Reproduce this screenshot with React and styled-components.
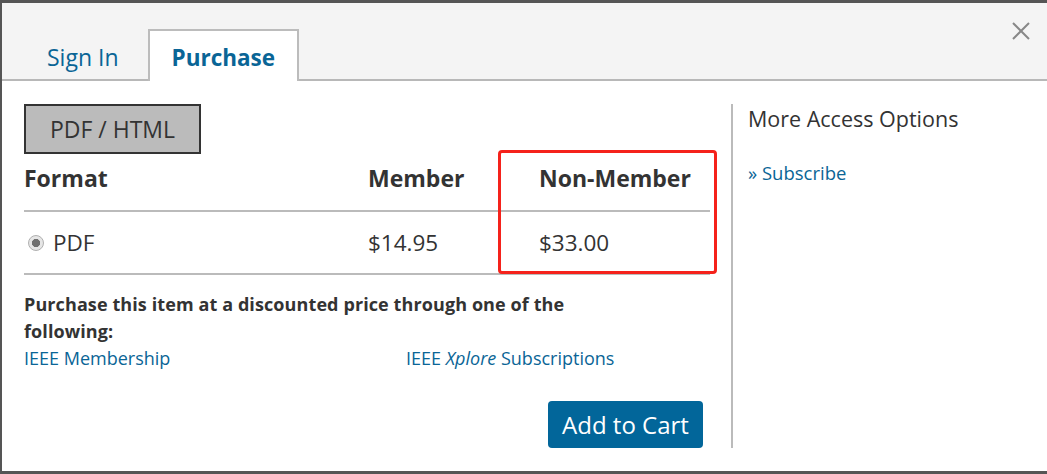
import styled, { createGlobalStyle } from 'styled-components'

const GlobalStyle = createGlobalStyle`
  html, body {
    margin: 0;
    padding: 0;
    background: #fff;
  }
  body {
    font-family: "Open Sans", "Noto Sans", sans-serif;
    color: #333;
  }
`

const Modal = styled.div`
  width: 1047px;
  height: 474px;
  box-sizing: border-box;
  border-top: 3px solid #555;
  border-left: 2px solid #555;
  border-bottom: 3px solid #555;
  display: flex;
  flex-direction: column;
  overflow: hidden;
`

const Header = styled.div`
  position: relative;
  height: 76px;
  background: #f4f4f4;
  border-bottom: 2px solid #b8b8b8;
  display: flex;
  align-items: flex-end;
  gap: 5px;
  padding-left: 21px;
`

const Tab = styled.div`
  height: ${p => (p.$active ? '52px' : '48px')};
  margin-bottom: ${p => (p.$active ? '-2px' : '0')};
  box-sizing: border-box;
  padding: 2px 22px 0;
  display: flex;
  align-items: center;
  font-size: ${p => (p.$active ? '22.5px' : '23px')};
  font-weight: ${p => (p.$active ? 700 : 400)};
  color: #0a6596;
  background: ${p => (p.$active ? '#fff' : 'transparent')};
  border: 2px solid ${p => (p.$active ? '#bcbcbc' : 'transparent')};
  border-bottom: none;
`

const Close = styled.button`
  position: absolute;
  top: 16px;
  right: 14px;
  width: 24px;
  height: 24px;
  padding: 0;
  border: none;
  background: none;
`

const Body = styled.div`
  flex: 1;
  display: flex;
  padding: 23px 0 23px 22px;
`

const Main = styled.div`
  width: 686px;
  display: flex;
  flex-direction: column;
`

const FormatButton = styled.div`
  align-self: flex-start;
  width: 177px;
  height: 50px;
  box-sizing: border-box;
  background: #bbb;
  border: 2px solid #333;
  display: flex;
  align-items: center;
  justify-content: center;
  font-size: 23px;
  color: #333;
`

const TableWrap = styled.div`
  position: relative;
`

const Row = styled.div`
  display: grid;
  grid-template-columns: 344px 171px 1fr;
  align-items: center;
  height: ${p => p.$h}px;
  padding-bottom: ${p => p.$pb || 0}px;
  border-bottom: 2px solid #bbb;
  font-size: ${p => (p.$head ? '23px' : '22.5px')};
  font-weight: ${p => (p.$head ? 700 : 400)};
  box-sizing: border-box;
`

const Cell = styled.div`
  display: flex;
  align-items: center;
  gap: 9px;
`

const Radio = styled.span`
  width: 16px;
  height: 16px;
  margin-left: 4px;
  border-radius: 50%;
  box-sizing: border-box;
  border: 1px solid #b0b0b0;
  background: radial-gradient(circle, #707070 0 3.8px, #e6e6e6 4.4px);
`

const Highlight = styled.div`
  position: absolute;
  left: 474px;
  top: -4px;
  width: 219px;
  height: 124px;
  box-sizing: border-box;
  border: 3px solid #f5221b;
  border-radius: 4px;
  pointer-events: none;
`

const Note = styled.p`
  margin: 16px 0 0;
  width: 580px;
  font-size: 18px;
  line-height: 27px;
  font-weight: 700;
  color: #333;
  letter-spacing: 0.1px;
`

const Links = styled.div`
  display: grid;
  grid-template-columns: 382px 1fr;
  font-size: 18px;
  line-height: 26px;
`

const Link = styled.a`
  color: #0a6596;
  text-decoration: none;
  em {
    font-style: italic;
  }
`

const CartRow = styled.div`
  margin-top: auto;
  display: flex;
  justify-content: flex-end;
  padding-right: 7px;
`

const CartButton = styled.button`
  width: 155px;
  height: 47px;
  border: none;
  border-radius: 4px;
  background: #02669a;
  color: #fff;
  font-family: inherit;
  font-size: 24px;
`

const Divider = styled.div`
  width: 2px;
  background: #bbb;
  margin-left: 21px;
`

const Side = styled.div`
  padding-left: 15px;
  display: flex;
  flex-direction: column;
`

const SideTitle = styled.div`
  font-size: 21.5px;
  line-height: 30px;
  color: #333;
`

const SideLink = styled(Link)`
  margin-top: 26px;
  font-size: 18.5px;
`

export default function App() {
  return (
    <>
      <GlobalStyle />
      <Modal>
        <Header>
          <Tab>Sign In</Tab>
          <Tab $active>Purchase</Tab>
          <Close aria-label="Close">
            <svg width="24" height="24" viewBox="0 0 24 24">
              <path d="M4 4 L20 20 M20 4 L4 20" stroke="#888" strokeWidth="2" />
            </svg>
          </Close>
        </Header>
        <Body>
          <Main>
            <FormatButton>PDF / HTML</FormatButton>
            <TableWrap>
              <Row $head $h={58} $pb={8}>
                <Cell>Format</Cell>
                <Cell>Member</Cell>
                <Cell>Non-Member</Cell>
              </Row>
              <Row $h={63}>
                <Cell><Radio />PDF</Cell>
                <Cell>$14.95</Cell>
                <Cell>$33.00</Cell>
              </Row>
              <Highlight />
            </TableWrap>
            <Note>Purchase this item at a discounted price through one of the following:</Note>
            <Links>
              <Link href="#">IEEE Membership</Link>
              <Link href="#">IEEE <em>Xplore</em> Subscriptions</Link>
            </Links>
            <CartRow>
              <CartButton>Add to Cart</CartButton>
            </CartRow>
          </Main>
          <Divider />
          <Side>
            <SideTitle>More Access Options</SideTitle>
            <SideLink href="#">» Subscribe</SideLink>
          </Side>
        </Body>
      </Modal>
    </>
  )
}
